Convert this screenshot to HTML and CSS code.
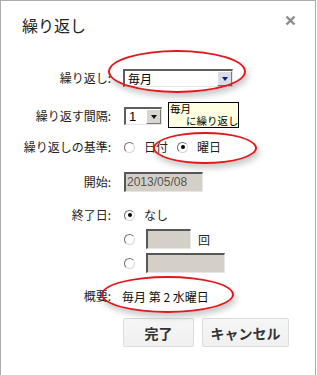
FILE: index.html
```html
<!DOCTYPE html>
<html lang="ja">
<head>
  <meta charset="UTF-8" />
  <title>繰り返し</title>
  <link rel="stylesheet" href="styles.css">
</head>
<body>
  <div class="dialog">
    <div class="head">
      <h1>繰り返し</h1>
      <span class="close" title="閉じる">
        <svg width="11" height="11" viewBox="0 0 11 11"><path d="M1.5 1.5 L9.5 9.5 M9.5 1.5 L1.5 9.5" stroke="#8c8c8c" stroke-width="2.4" /></svg>
      </span>
    </div>

    <div class="form">
      <div class="row">
        <span class="label">繰り返し:</span>
        <div class="select wide">
          <span class="value">毎月</span>
          <span class="drop hot"><i></i></span>
        </div>
      </div>

      <div class="row tip-row">
        <span class="label">繰り返す間隔:</span>
        <div class="field">
          <div class="select narrow">
            <span class="value num">1</span>
            <span class="drop"><i></i></span>
          </div>
          <div class="tooltip"><span class="tip-line">毎月</span><span class="tip-line indent">に繰り返し</span></div>
        </div>
      </div>

      <div class="row basis">
        <span class="label">繰り返しの基準:</span>
        <span class="radio"></span><span class="opt">日付</span>
        <span class="radio checked"></span><span class="opt">曜日</span>
      </div>

      <div class="row start">
        <span class="label">開始:</span>
        <div class="input date">2013/05/08</div>
      </div>

      <div class="row">
        <span class="label">終了日:</span>
        <span class="radio checked"></span><span class="opt">なし</span>
      </div>
      <div class="row sub">
        <span class="label"></span>
        <span class="radio"></span>
        <div class="input count"></div>
        <span class="unit">回</span>
      </div>
      <div class="row sub">
        <span class="label"></span>
        <span class="radio"></span>
        <div class="input until"></div>
      </div>

      <div class="row">
        <span class="label">概要:</span>
        <span class="summary">毎月 第 2 水曜日</span>
      </div>
    </div>

    <div class="actions">
      <button class="btn done">完了</button>
      <button class="btn cancel">キャンセル</button>
    </div>

    <!-- annotation marks -->
    <div class="mark m1"></div>
    <div class="mark m2"></div>
    <div class="mark m3"></div>
  </div>
</body>
</html>
```

FILE: styles.css
```css
html, body {
  margin: 0;
  overflow: hidden;
  background: #fff;
}
body {
  font-family: "Noto Sans CJK JP", "Noto Sans", sans-serif;
  font-size: 12px;
  color: #222;
}
.dialog {
  position: relative;
  width: 316px;
  height: 375px;
  box-sizing: border-box;
  border: 1px solid #acacac;
  border-bottom: 0;
  background: #fff;
}
.head {
  height: 67px;
  box-sizing: border-box;
  padding: 14px 19px 0 21px;
  display: flex;
  justify-content: space-between;
  align-items: flex-start;
}
h1 {
  margin: 0;
  font-size: 16px;
  font-weight: normal;
  line-height: 20px;
  color: #222;
}
.close {
  display: flex;
  cursor: pointer;
}
.row {
  display: flex;
  align-items: center;
  height: 20px;
  margin-top: 13px;
}
.row:first-child {
  margin-top: 0;
}
.tip-row {
  margin-top: 18px;
}
.basis {
  margin-top: 11px;
}
.start {
  margin-top: 15px;
}
.sub {
  margin-top: 4px;
}
.label {
  width: 122px;
  flex-shrink: 0;
  box-sizing: border-box;
  padding-right: 12px;
  text-align: right;
  line-height: 20px;
  color: #222;
}
.field {
  position: relative;
  display: flex;
}

/* old style select boxes */
.select {
  display: flex;
  align-items: stretch;
  height: 18px;
  box-sizing: border-box;
  border-style: solid;
  border-width: 2px 1px 1px 2px;
  border-color: #5e5e5e #e4e4e4 #e4e4e4 #5e5e5e;
  background: #fff;
}
.select.wide {
  width: 110px;
}
.select.narrow {
  width: 38px;
  margin-left: 1px;
}
.select .value {
  flex: 1;
  padding-left: 3px;
  line-height: 15px;
  color: #000;
}
.select .num {
  font-family: "Liberation Sans", Arial, sans-serif;
  font-size: 13px;
}
.drop {
  width: 15px;
  box-sizing: border-box;
  border-style: solid;
  border-width: 1px;
  border-color: #fff #7a7a7a #7a7a7a #fff;
  background: #d8d6d0;
  display: flex;
  align-items: center;
  justify-content: center;
}
.drop.hot {
  background: #dcdce4;
}
.drop i {
  width: 0;
  height: 0;
  border-left: 3.5px solid transparent;
  border-right: 3.5px solid transparent;
  border-top: 4px solid #111;
}
.drop.hot i {
  border-top-color: #0c1c7c;
}
.tooltip {
  position: absolute;
  left: 45px;
  top: -5px;
  width: 71px;
  height: 26px;
  box-sizing: border-box;
  border: 1px solid #000;
  background: #ffffe1;
  color: #000;
  font-size: 10.5px;
  padding-left: 1px;
  white-space: nowrap;
  display: flex;
  flex-direction: column;
}
.tip-line {
  display: block;
  height: 12px;
  line-height: 12px;
}
.tip-line.indent {
  padding-left: 16px;
}

/* radios */
.radio {
  width: 11px;
  height: 11px;
  flex-shrink: 0;
  box-sizing: border-box;
  border-radius: 50%;
  border: 1px solid;
  border-color: #6e6e6e #d6d6d6 #d6d6d6 #6e6e6e;
  background: #fff;
  display: flex;
  align-items: center;
  justify-content: center;
  margin-left: 1px;
}
.radio.checked::after {
  content: "";
  width: 4px;
  height: 4px;
  border-radius: 50%;
  background: #000;
}
.opt {
  margin-left: 9px;
  margin-right: 8px;
  line-height: 20px;
}

.input {
  height: 20px;
  box-sizing: border-box;
  border-style: solid;
  border-width: 2px 1px 1px 2px;
  border-color: #575757 #e6e6e6 #e6e6e6 #575757;
  background: #d4d0c8;
}
.input.date {
  width: 79px;
  margin-left: 1px;
  padding-left: 1px;
  font-family: "Liberation Sans", Arial, sans-serif;
  font-size: 12px;
  line-height: 16px;
  color: #555;
}
.input.count {
  width: 45px;
  margin-left: 11px;
}
.input.until {
  width: 79px;
  margin-left: 11px;
}
.unit {
  margin-left: 7px;
}
.summary {
  margin-left: -1px;
  color: #111;
}

.actions {
  display: flex;
  gap: 8px;
  margin: 12px 0 0 122px;
}
.btn {
  height: 29px;
  box-sizing: border-box;
  border: 1px solid #dcdcdc;
  border-radius: 2px;
  background: linear-gradient(#f6f6f6, #f0f0f0);
  font-family: "Noto Sans CJK JP", sans-serif;
  font-size: 14px;
  font-weight: bold;
  color: #333;
  padding: 0;
  cursor: pointer;
}
.btn.done {
  width: 71px;
}
.btn.cancel {
  width: 87px;
}

/* red ellipses drawn over the screenshot */
.mark {
  position: absolute;
  box-sizing: border-box;
  border: 2px solid #e3161b;
  border-radius: 50%;
  box-shadow: 2px 4px 6px rgba(0, 0, 0, 0.22);
  pointer-events: none;
}
.m1 {
  left: 107px;
  top: 49px;
  width: 138px;
  height: 43px;
}
.m2 {
  left: 152px;
  top: 131px;
  width: 104px;
  height: 32px;
}
.m3 {
  left: 100px;
  top: 275px;
  width: 133px;
  height: 37px;
}
```
